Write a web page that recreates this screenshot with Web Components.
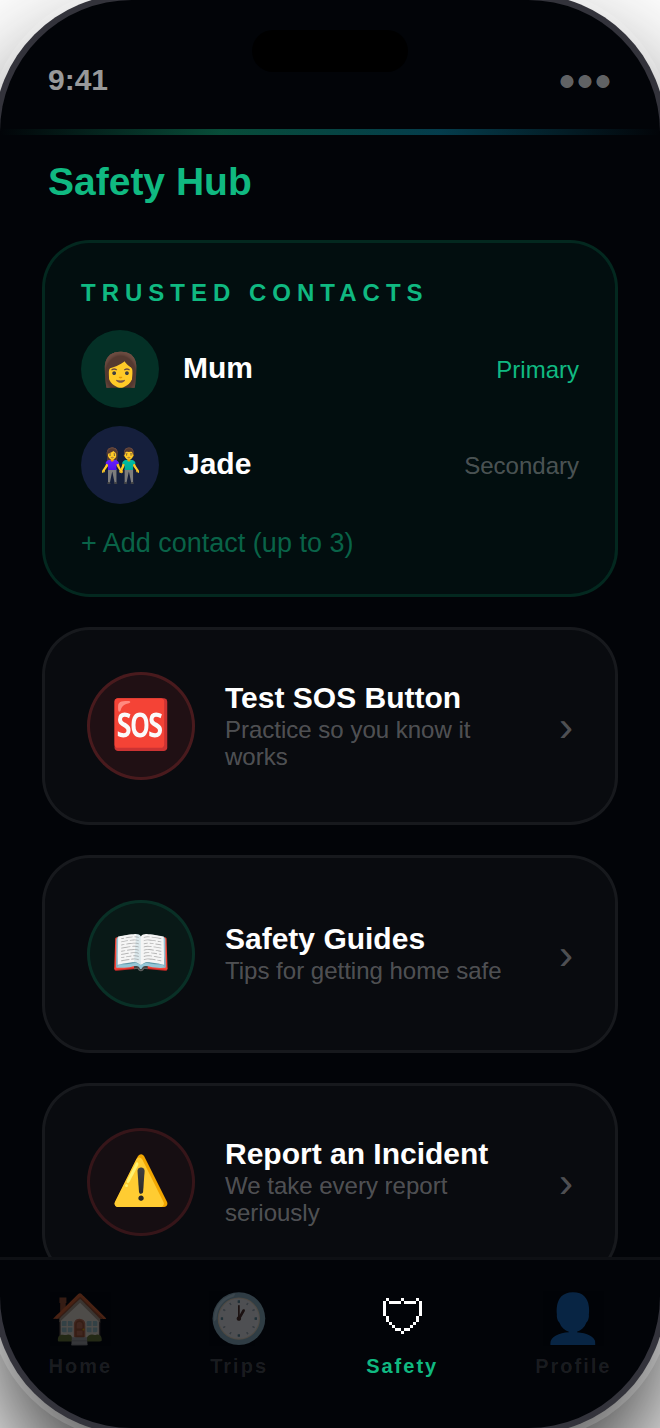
<!DOCTYPE html>
<html lang="en">
<head>
<meta charset="utf-8">
<meta name="viewport" content="width=device-width, initial-scale=1">
<title>Safety Hub</title>
<style>
  html, body {
    height: 100%;
    margin: 0;
  }

  body {
    background: #fff;
    color: #fff;
    font-family: "Liberation Sans", Arial, sans-serif;
    overflow: hidden;
    --accent: #10b981;
    --muted: rgba(255, 255, 255, 0.3);
  }
</style>
</head>
<body>
<phone-shell>
  <status-bar slot="status" time="9:41"></status-bar>

  <page-title slot="title">Safety Hub</page-title>

  <contact-card heading="Trusted Contacts">
    <contact-row name="Mum" role-label="Primary" primary>👩</contact-row>
    <contact-row name="Jade" role-label="Secondary">👫</contact-row>
    <span slot="add">+ Add contact (up to 3)</span>
  </contact-card>

  <action-card heading="Test SOS Button" tone="danger" icon="🆘">Practice so you know it works</action-card>
  <action-card heading="Safety Guides" tone="safe" icon="📖">Tips for getting home safe</action-card>
  <action-card heading="Report an Incident" tone="warn" icon="⚠️">We take every report seriously</action-card>

  <tab-bar slot="tabs">
    <tab-item icon="🏠">Home</tab-item>
    <tab-item icon="🕐">Trips</tab-item>
    <tab-item active>
      <svg slot="icon" width="39" height="54" viewBox="0 0 13 18" fill="#fff" shape-rendering="crispEdges" aria-hidden="true">
        <!-- pixel shield: one unit per block -->
        <path d="M1 2h1v1H1zM6 2h1v1H6zM11 2h1v1h-1z
                 M2 3h4v1H2zM7 3h4v1H7z
                 M0 3h1v5H0zM12 3h1v5h-1z
                 M1 8h1v2H1zM11 8h1v2h-1z
                 M2 10h1v1H2zM10 10h1v1h-1z
                 M3 11h1v1H3zM9 11h1v1H9z
                 M4 12h2v1H4zM7 12h2v1H7z
                 M6 13h1v1H6z"/>
      </svg>
      Safety
    </tab-item>
    <tab-item icon="👤">Profile</tab-item>
  </tab-bar>
</phone-shell>

<script>
// Attach an open shadow root and fill it
function mount(el, html) {
  el.attachShadow({ mode: 'open' }).innerHTML = html;
}

class PhoneShell extends HTMLElement {
  constructor() {
    super();
    mount(this, `
    <style>
      :host {
        display: flex;
        flex-direction: column;
        height: 100vh;
        border-radius: 132px;
        background: #020408;
        box-shadow:
          0 0 0 6px #33333b,
          0 0 0 12px rgba(255, 255, 255, 0.15),
          0 60px 120px rgba(0, 0, 0, 0.85);
        overflow: hidden;
      }

      .strip {
        flex: none;
        height: 6px;
        background: linear-gradient(90deg, transparent, #10b981, #0891b2, transparent);
        opacity: 0.4;
      }

      main {
        flex: 1;
        min-height: 0;
        display: flex;
        flex-direction: column;
        gap: 30px;
        padding: 24px 42px 0;
        overflow: hidden;
      }
    </style>
    <slot name="status"></slot>
    <div class="strip"></div>
    <main>
      <slot name="title"></slot>
      <slot></slot>
    </main>
    <slot name="tabs"></slot>
  `);
  }
}

class StatusBar extends HTMLElement {
  connectedCallback() {
    mount(this, `
    <style>
      :host {
        position: relative;
        flex: none;
        display: flex;
        justify-content: space-between;
        align-items: center;
        height: 69px;
        padding: 45px 48px 15px;
        font-size: 30px;
        font-weight: 700;
        line-height: 36px;
        color: rgba(255, 255, 255, 0.6);
      }

      /* camera island sits over the bar */
      .island {
        position: absolute;
        top: 30px;
        left: 50%;
        width: 156px;
        height: 42px;
        margin-left: -78px;
        border-radius: 24px;
        background: #000;
      }

      .dots {
        font-weight: 400;
        color: rgba(255, 255, 255, 0.4);
      }
    </style>
    <div class="island"></div>
    <span>${this.getAttribute('time')}</span>
    <span class="dots">●●●</span>
  `);
  }
}

class PageTitle extends HTMLElement {
  constructor() {
    super();
    mount(this, `
    <style>
      :host {
        flex: none;
        display: block;
        padding: 0 6px 6px;
      }

      h1 {
        margin: 0;
        font-size: 39px;
        line-height: 45px;
        color: var(--accent);
      }
    </style>
    <h1><slot></slot></h1>
  `);
  }
}

class ContactCard extends HTMLElement {
  connectedCallback() {
    mount(this, `
    <style>
      :host {
        flex: none;
        display: flex;
        flex-direction: column;
        gap: 18px;
        padding: 36px;
        border: 3px solid rgba(16, 185, 129, 0.15);
        border-radius: 48px;
        background: rgba(16, 185, 129, 0.06);
      }

      h2 {
        margin: 0 0 6px;
        font-size: 24px;
        line-height: 27px;
        letter-spacing: 6px;
        text-transform: uppercase;
        color: var(--accent);
      }

      button {
        align-self: flex-start;
        padding: 6px 0 0;
        border: 0;
        background: none;
        font: inherit;
        font-size: 27px;
        line-height: 30px;
        color: rgba(16, 185, 129, 0.5);
        cursor: pointer;
      }
    </style>
    <h2>${this.getAttribute('heading')}</h2>
    <slot></slot>
    <button type="button"><slot name="add"></slot></button>
  `);
  }
}

class ContactRow extends HTMLElement {
  connectedCallback() {
    mount(this, `
    <style>
      :host {
        display: flex;
        align-items: center;
        gap: 24px;
        --avatar: rgba(99, 102, 241, 0.2);
        --role: var(--muted);
      }

      :host([primary]) {
        --avatar: rgba(16, 185, 129, 0.2);
        --role: var(--accent);
      }

      .avatar {
        flex: none;
        display: flex;
        align-items: center;
        justify-content: center;
        width: 78px;
        height: 78px;
        border-radius: 50%;
        background: var(--avatar);
        font-size: 33px;
      }

      .name {
        flex: 1;
        padding-bottom: 3px;
        font-size: 30px;
        font-weight: 700;
      }

      .role {
        padding-top: 2px;
        font-size: 24px;
        color: var(--role);
      }
    </style>
    <span class="avatar"><slot></slot></span>
    <span class="name">${this.getAttribute('name')}</span>
    <span class="role">${this.getAttribute('role-label')}</span>
  `);
  }
}

class ActionCard extends HTMLElement {
  connectedCallback() {
    mount(this, `
    <style>
      :host {
        flex: none;
        display: block;
        --ring: rgba(239, 68, 68, 0.2);
        --fill: rgba(239, 68, 68, 0.1);
      }

      :host([tone="safe"]) {
        --ring: rgba(16, 185, 129, 0.15);
        --fill: rgba(16, 185, 129, 0.08);
      }

      :host([tone="warn"]) {
        --ring: rgba(239, 68, 68, 0.15);
        --fill: rgba(239, 68, 68, 0.06);
      }

      button {
        display: flex;
        align-items: center;
        gap: 30px;
        width: 100%;
        padding: 42px;
        border: 3px solid rgba(255, 255, 255, 0.06);
        border-radius: 48px;
        background: rgba(255, 255, 255, 0.03);
        font: inherit;
        color: inherit;
        text-align: left;
        cursor: pointer;
      }

      .icon {
        flex: none;
        display: flex;
        align-items: center;
        justify-content: center;
        box-sizing: border-box;
        width: 108px;
        height: 108px;
        padding-bottom: 3px;
        border: 3px solid var(--ring);
        border-radius: 50%;
        background: var(--fill);
        font-size: 48px;
      }

      .text {
        flex: 1;
        padding-bottom: 3px;
      }

      .heading {
        display: block;
        font-size: 30px;
        font-weight: 700;
        line-height: 36px;
      }

      .sub {
        display: block;
        font-size: 24px;
        line-height: 27px;
        color: var(--muted);
      }

      .chevron {
        padding-top: 2px;
        font-size: 42px;
        color: var(--muted);
      }
    </style>
    <button type="button">
      <span class="icon">${this.getAttribute('icon')}</span>
      <span class="text">
        <span class="heading">${this.getAttribute('heading')}</span>
        <span class="sub"><slot></slot></span>
      </span>
      <span class="chevron">›</span>
    </button>
  `);
  }
}

class TabBar extends HTMLElement {
  constructor() {
    super();
    mount(this, `
    <style>
      :host {
        flex: none;
        display: block;
        border-top: 3px solid rgba(255, 255, 255, 0.05);
      }

      nav {
        display: flex;
        justify-content: space-around;
        padding: 32px 0 48px;
      }
    </style>
    <nav><slot></slot></nav>
  `);
  }
}

class TabItem extends HTMLElement {
  connectedCallback() {
    mount(this, `
    <style>
      :host {
        display: block;
      }

      a {
        display: flex;
        flex-direction: column;
        align-items: center;
        gap: 7px;
        color: #fff;
        text-decoration: none;
      }

      .icon {
        display: flex;
        height: 54px;
        font-size: 48px;
        line-height: 54px;
        opacity: 0.3;
      }

      .label {
        font-size: 20px;
        font-weight: 700;
        line-height: 27px;
        letter-spacing: 2px;
        color: rgba(255, 255, 255, 0.1);
      }

      :host([active]) .icon {
        opacity: 1;
      }

      :host([active]) .label {
        color: var(--accent);
      }
    </style>
    <a href="#">
      <span class="icon"><slot name="icon">${this.getAttribute('icon') || ''}</slot></span>
      <span class="label"><slot></slot></span>
    </a>
  `);
  }
}

customElements.define('phone-shell', PhoneShell);
customElements.define('status-bar', StatusBar);
customElements.define('page-title', PageTitle);
customElements.define('contact-card', ContactCard);
customElements.define('contact-row', ContactRow);
customElements.define('action-card', ActionCard);
customElements.define('tab-bar', TabBar);
customElements.define('tab-item', TabItem);
</script>
</body>
</html>
